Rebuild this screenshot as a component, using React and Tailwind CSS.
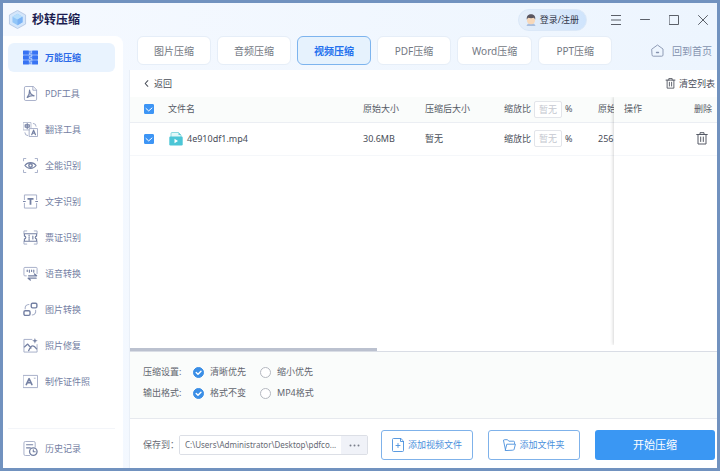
import React from "react";

const stroke = {
  fill: "none",
  stroke: "currentColor",
  strokeWidth: 1,
  strokeLinecap: "round",
  strokeLinejoin: "round",
};

const FRAME = "M1 4V1h3M12 1h3v3M15 12v3h-3M4 15H1v-3";
const FAINT = "#a3acc6";

function Glyph({ name }) {
  switch (name) {
    case "compress":
      return (
        <g>
          <path d="M6 0.500h4v15H6z" fill="#a9c6fb" />
          <g fill="#3873f3">
            <rect x="0" y="0.500" width="6.300" height="4.600" rx="0.600" />
            <rect x="0" y="5.700" width="6.300" height="4.600" rx="0.600" />
            <rect x="0" y="10.900" width="6.300" height="4.600" rx="0.600" />
            <rect x="9.700" y="0.500" width="6.300" height="4.600" rx="0.600" />
            <rect x="9.700" y="5.700" width="6.300" height="4.600" rx="0.600" />
            <rect x="9.700" y="10.900" width="6.300" height="4.600" rx="0.600" />
          </g>
          <path d="M6.800 2h1.200M8 4h1.200M6.800 6h1.200M8 8h1.200M6.800 10h1.200M8 12h1.200M6.800 14h1.200" stroke="#3873f3" strokeWidth="1.200" />
        </g>
      );
    case "pdf":
      return (
        <g {...stroke}>
          <path d="M10.500 0.500H3A1.500 1.500 0 0 0 1.500 2v12A1.500 1.500 0 0 0 3 15.500h10a1.500 1.500 0 0 0 1.500-1.500V4.500zM10.500 0.500v4h4" stroke={FAINT} />
          <path d="M7 4.500c0.300 3 2 5 4.800 6-2.500-0.300-5 0-7.300 1.700C6.300 10 7.200 7.500 7 4.500z" fill="currentColor" fillOpacity="0.350" strokeWidth="1.300" />
        </g>
      );
    case "translate":
      return (
        <g {...stroke}>
          <rect x="0.500" y="0.500" width="8" height="8" stroke={FAINT} strokeWidth="0.800" />
          <path d="M2.300 3h4.400v2.400H2.300zM4.500 1.700v5.500" strokeWidth="1.200" />
          <rect x="7" y="7" width="8.500" height="8.500" fill="#fff" stroke={FAINT} />
          <path d="M9.300 13.500l2-4.800 2 4.800M10 12h2.600" strokeWidth="1.300" />
          <path d="M11 1.500a3 3 0 0 1 3 3M5 14.500a3 3 0 0 1-3-3" stroke={FAINT} />
        </g>
      );
    case "eye":
      return (
        <g {...stroke}>
          <path d="M0.500 3V0.500H3M13 0.500h2.500V3M15.500 13v2.500H13M3 15.500H0.500V13" stroke={FAINT} />
          <path d="M2 8C5 3.900 11 3.900 14 8 11 12.100 5 12.100 2 8z" strokeWidth="1.200" />
          <circle cx="8" cy="8" r="1.800" strokeWidth="1.500" />
        </g>
      );
    case "text":
      return (
        <g {...stroke}>
          <path d="M1.500 6V1h13v5M14.500 10v5h-13v-5" stroke={FAINT} />
          <path d="M0 8h2.500M13.500 8h2.500" />
          <path d="M4.800 5.300h6.400M8 5.300v6.200" strokeWidth="1.900" strokeLinecap="butt" />
        </g>
      );
    case "ticket":
      return (
        <g {...stroke}>
          <path d={FRAME} stroke={FAINT} />
          <path d="M1.500 4h13v2.500a1.500 1.500 0 0 0 0 3V12h-13V9.500a1.500 1.500 0 0 0 0-3z" strokeWidth="1.200" />
          <path d="M6.500 5.500v1M6.500 7.700v1M6.500 10v1M10.500 6.500v3" strokeWidth="1.200" />
        </g>
      );
    case "voice":
      return (
        <g {...stroke}>
          <path d="M3.500 10.500H2A1 1 0 0 1 1 9.500v-7a1 1 0 0 1 1-1h12a1 1 0 0 1 1 1V8" stroke={FAINT} />
          <path d="M4.500 4.300v1.500M6.800 4.300v2.400M9.200 4.300v1.500M11.500 4.300v2.400" strokeWidth="1.200" />
          <path d="M6 10.500h8.500l-2.300-2M14 13H5.500l2.300 2" strokeWidth="1.400" />
        </g>
      );
    case "convert":
      return (
        <g {...stroke}>
          <rect x="8.800" y="1.300" width="6" height="5" rx="1.400" strokeWidth="1.500" />
          <rect x="1" y="9.300" width="6.500" height="5" rx="1.400" strokeWidth="1.500" />
          <path d="M2.300 7.300C2 4.500 3.500 2.800 6.300 2.600M13.500 8.800c0.500 2.700-1 4.700-3.700 5" stroke={FAINT} strokeWidth="1.100" />
        </g>
      );
    case "repair":
      return (
        <g {...stroke}>
          <path d="M9.500 1.500H1v13.500h14V7" stroke={FAINT} />
          <path d="M1.500 9.500L5 6.500l3.500 4.200M6 13.500C7.500 10 9 8.300 10.500 8.300s2.500 1.200 4 3.200" strokeWidth="1.400" />
          <path d="M12.700 0l0.800 2.200 2.200 0.800-2.200 0.800-0.800 2.200-0.800-2.200-2.200-0.800 2.200-0.800z" fill="currentColor" stroke="none" />
        </g>
      );
    case "portrait":
      return (
        <g {...stroke}>
          <rect x="0.500" y="1.500" width="15" height="13" stroke={FAINT} />
          <path d="M3.500 11.300L6.500 5l3 6.300M4.700 9.300h3.600" strokeWidth="1.700" />
          <path d="M12 4.500h1" stroke={FAINT} />
        </g>
      );
    default:
      return (
        <g {...stroke}>
          <path d="M7 15.500H2.500A1.500 1.500 0 0 1 1 14V2A1.500 1.500 0 0 1 2.500 0.500h9A1.500 1.500 0 0 1 13 2v4.500" stroke={FAINT} />
          <path d="M3.800 4h6.500M3.800 7.300h4" strokeWidth="1.300" />
          <circle cx="11" cy="11.300" r="4" strokeWidth="1.400" />
          <path d="M11 9.300v2.200h2" strokeWidth="1.200" />
        </g>
      );
  }
}

function NavIcon({ name }) {
  return (
    <svg viewBox="0 0 16 16" className="size-[15px] shrink-0" aria-hidden="true">
      <Glyph name={name} />
    </svg>
  );
}

const navItems = [
  ["compress", "万能压缩"],
  ["pdf", "PDF工具"],
  ["translate", "翻译工具"],
  ["eye", "全能识别"],
  ["text", "文字识别"],
  ["ticket", "票证识别"],
  ["voice", "语音转换"],
  ["convert", "图片转换"],
  ["repair", "照片修复"],
  ["portrait", "制作证件照"],
];

const tabs = ["图片压缩", "音频压缩", "视频压缩", "PDF压缩", "Word压缩", "PPT压缩"];

function Trash({ className }) {
  return (
    <svg viewBox="0 0 12 13" className={className} aria-hidden="true">
      <g {...stroke}>
        <path d="M0.700 2.500h10.600M4 2.500v-1.800h4v1.800M2 2.500v9.500h8V2.500M4.700 5v4.500M7.300 5v4.500" />
      </g>
    </svg>
  );
}

function Sidebar() {
  return (
    <nav className="flex w-30 shrink-0 flex-col rounded-tr-lg bg-white px-[5px] pt-[7px] text-[#7480a3]">
      <ul className="flex flex-col gap-[7px]">
        {navItems.map(([icon, label], i) => (
          <li key={label}>
            <button
              type="button"
              className={
                i === 0
                  ? "flex h-[29px] w-[107px] items-center gap-[7px] rounded-md bg-[#e9f3fe] pl-[15px] font-bold text-[#2b69e8]"
                  : "flex h-[29px] w-[107px] items-center gap-[7px] rounded-md pl-[15px]"
              }
            >
              <NavIcon name={icon} />
              {label}
            </button>
          </li>
        ))}
      </ul>
      <div className="mt-auto w-[107px] border-t border-[#f3f5f9] py-[5px]">
        <button type="button" className="flex h-[29px] w-full items-center gap-[7px] pl-[15px]">
          <NavIcon name="history" />
          历史记录
        </button>
      </div>
    </nav>
  );
}

function Header() {
  return (
    <header className="flex h-[33px] shrink-0 items-center pl-[5px]">
      <svg viewBox="0 0 20 20" className="size-[19px]" aria-hidden="true">
        <path d="M10 0.500l8.500 4.700v9.600L10 19.500l-8.500-4.700V5.200z" fill="#d3e6fb" stroke="#b3c6e2" strokeWidth="0.900" />
        <path d="M10 4l5.300 3v6L10 16l-5.300-3V7z" fill="#92c6f8" />
        <path d="M10 4l5.300 3L10 10 4.700 7z" fill="#b8dffc" />
        <path d="M10 10l5.300-3v6L10 16z" fill="#7ab2f5" />
      </svg>
      <h1 className="ml-[5px] text-xs font-bold text-[#1b1c50]">秒转压缩</h1>
      <button
        type="button"
        className="ml-auto flex h-[22px] items-center gap-[3px] rounded-full border border-[#dbe8f8] bg-linear-to-r from-[#e6effa] to-[#cfe4fc] pr-[7px] pl-[6px] text-[#33384a]"
      >
        <svg viewBox="0 0 12 12" className="size-3" aria-hidden="true">
          <path d="M1.500 12c0.500-2 2-2.700 4.500-2.700s4 0.700 4.500 2.700z" fill="#a9bfdf" />
          <circle cx="6" cy="6.300" r="4" fill="#f7d8ba" />
          <path d="M1.800 5.500C1.300 2 3.500 0.300 6 0.300s4.800 1.500 4.200 5.200C9.500 5 9.500 4.300 9 3.800 7 4.300 4.800 4.200 3 3.800 2.500 4.300 2.600 5 1.800 5.500z" fill="#5a5660" />
        </svg>
        登录/注册
      </button>
      <div className="ml-[15px] flex gap-px text-[#5b6069]">
        <button type="button" aria-label="菜单" className="grid h-7 w-7 place-items-center">
          <svg viewBox="0 0 10 10" className="size-[10px]"><path d="M0 0.500h10M0 5h10M0 9.500h10" {...stroke} /></svg>
        </button>
        <button type="button" aria-label="最小化" className="grid h-7 w-7 place-items-center">
          <svg viewBox="0 0 10 10" className="size-[10px]"><path d="M0.500 4.500h9" {...stroke} /></svg>
        </button>
        <button type="button" aria-label="最大化" className="grid h-7 w-7 place-items-center">
          <svg viewBox="0 0 10 10" className="size-[10px]"><path d="M0.500 0.500h9v9h-9z" {...stroke} /></svg>
        </button>
        <button type="button" aria-label="关闭" className="grid h-7 w-7 place-items-center">
          <svg viewBox="0 0 10 10" className="size-[10px]"><path d="M0.500 0.500l9 9M9.500 0.500l-9 9" {...stroke} /></svg>
        </button>
      </div>
    </header>
  );
}

function Check({ label }) {
  return (
    <label className="grid size-[10px]">
      <input
        type="checkbox"
        defaultChecked
        aria-label={label}
        className="peer col-start-1 row-start-1 size-[10px] appearance-none rounded-[1px] border border-[#c0c4cc] bg-white checked:border-[#3d95f5] checked:bg-[#3d95f5]"
      />
      <svg viewBox="0 0 10 10" className="pointer-events-none z-10 col-start-1 row-start-1 size-[10px] text-white opacity-0 peer-checked:opacity-100" aria-hidden="true">
        <path d="M2 4.500l2.700 2.400L8 4" {...stroke} />
      </svg>
    </label>
  );
}

function Ratio({ id }) {
  return (
    <div className="flex items-center gap-[3px]">
      <label htmlFor={id}>缩放比</label>
      <input
        id={id}
        type="text"
        placeholder="暂无"
        className="h-[17px] w-7 rounded-xs border border-[#e3e5ea] bg-white text-center placeholder:text-[#c5c8d0]"
      />
      <span>%</span>
    </div>
  );
}

function Radio({ name, label, checked }) {
  return (
    <label className="flex w-[67px] items-center gap-[6px]">
      <span className="grid size-[11px]">
        <input
          type="radio"
          name={name}
          defaultChecked={checked}
          className="peer col-start-1 row-start-1 size-[11px] appearance-none rounded-full border border-[#b4b8c0] bg-white checked:border-[#3a8ee6] checked:bg-[#3a8ee6]"
        />
        <svg viewBox="0 0 11 11" className="pointer-events-none z-10 col-start-1 row-start-1 size-[11px] text-white opacity-0 peer-checked:opacity-100" aria-hidden="true">
          <path d="M3.200 5.500l1.800 1.800L8 4.200" {...stroke} strokeWidth="1.400" />
        </svg>
      </span>
      {label}
    </label>
  );
}

function FileTable() {
  return (
    <div className="flex min-h-0 flex-1 pb-[3px]">
      <div className="min-w-0 flex-1 overflow-hidden">
        <table className="w-full min-w-[568px] table-fixed text-left whitespace-nowrap">
          <colgroup>
            <col className="w-[38px]" />
            <col />
            <col className="w-[62px]" />
            <col className="w-[79px]" />
            <col className="w-[94px]" />
            <col className="w-[100px]" />
          </colgroup>
          <thead className="text-[#565b66]">
            <tr className="h-[25px] border-b border-[#ebeef3] bg-[#fafcfb]">
              <th className="pl-[14px] font-normal"><Check label="全选" /></th>
              <th className="font-normal">文件名</th>
              <th className="font-normal">原始大小</th>
              <th className="font-normal">压缩后大小</th>
              <th className="font-normal"><Ratio id="ratio-all" /></th>
              <th className="font-normal">原始</th>
            </tr>
          </thead>
          <tbody className="text-[#484d58]">
            <tr className="h-[33px] border-b border-[#f5f7fa]">
              <td className="pl-[14px]"><Check label="4e910df1.mp4" /></td>
              <td>
                <span className="flex items-center gap-1 pl-px">
                  <svg viewBox="0 0 14 14" className="size-[14px]" aria-hidden="true">
                    <path d="M2 6V1.500a1 1 0 0 1 1-1h6.500L12 3v3z" fill="#e3f8f9" stroke="#62cdd5" strokeWidth="0.700" />
                    <path d="M9.500 0.500V3H12z" fill="#62cdd5" />
                    <rect x="0.300" y="4.500" width="13.400" height="9" rx="1.200" fill="#4cc6d6" />
                    <path d="M5.500 6.800v4.400L9 9z" fill="#fff" />
                  </svg>
                  4e910df1.mp4
                </span>
              </td>
              <td>30.6MB</td>
              <td>暂无</td>
              <td><Ratio id="ratio-file" /></td>
              <td>256</td>
            </tr>
          </tbody>
        </table>
      </div>
      <div className="w-[103px] shrink-0 bg-white shadow-[-1px_0_3px_rgba(0,0,0,0.16)] [clip-path:inset(0_0_0_-4px)]">
        <table className="w-full text-left text-[#565b66]">
          <thead>
            <tr className="h-[25px] border-b border-[#ebeef3] bg-[#fafcfb]">
              <th className="pl-[10px] font-normal">操作</th>
              <th className="pr-[5px] text-right font-normal">删除</th>
            </tr>
          </thead>
          <tbody>
            <tr className="h-[33px] border-b border-[#f5f7fa]">
              <td />
              <td className="pr-[9px]">
                <button type="button" aria-label="删除" className="ml-auto block">
                  <Trash className="h-[13px] w-3" />
                </button>
              </td>
            </tr>
          </tbody>
        </table>
      </div>
    </div>
  );
}

function Footer() {
  return (
    <footer className="flex h-[50px] shrink-0 items-center border-t border-[#e6e9ee] bg-white pt-[3px] pr-[2px] pl-[13px] text-[#666a74]">
      <label htmlFor="save-path" className="w-9 shrink-0 whitespace-nowrap">保存到：</label>
      <div className="flex h-5 min-w-0 flex-1 overflow-hidden rounded-xs border border-[#dcdfe6]">
        <input
          id="save-path"
          type="text"
          readOnly
          defaultValue="C:\Users\Administrator\Desktop\pdfco..."
          className="min-w-0 flex-1 bg-white pl-[5px] text-[8px]"
        />
        <button type="button" aria-label="浏览" className="grid w-[26px] place-items-center bg-[#f0f2f8]">
          <svg viewBox="0 0 11 3" className="h-[3px] w-[11px]" fill="#7a7f8c" aria-hidden="true">
            <circle cx="1.500" cy="1.500" r="1" />
            <circle cx="5.500" cy="1.500" r="1" />
            <circle cx="9.500" cy="1.500" r="1" />
          </svg>
        </button>
      </div>
      <button type="button" className="ml-[13px] flex h-[30px] w-[92px] shrink-0 items-center justify-center gap-1 rounded-[3px] border border-[#7fb2ea] text-[#4a90dc]">
        <svg viewBox="0 0 12 14" className="h-[14px] w-3" aria-hidden="true">
          <path d="M8.500 0.500H1.500a1 1 0 0 0-1 1v11a1 1 0 0 0 1 1h9a1 1 0 0 0 1-1V3.500zM8.500 0.500v3h3M6 5.500v4M4 7.500h4" {...stroke} strokeWidth="0.900" />
        </svg>
        添加视频文件
      </button>
      <button type="button" className="ml-[15px] flex h-[30px] w-[92px] shrink-0 items-center justify-center gap-[3px] rounded-[3px] border border-[#7fb2ea] text-[#4a90dc]">
        <svg viewBox="0 0 13 12" className="h-3 w-[13px]" aria-hidden="true">
          <path d="M2.500 11L0.600 2a1 1 0 0 1 1-1.300h2.900l1.300 1.500h4.700a1 1 0 0 1 1 1v1.300M2.300 11.200l1.500-6h8.600l-1.300 5.200a1 1 0 0 1-1 0.800z" {...stroke} strokeWidth="0.900" />
        </svg>
        添加文件夹
      </button>
      <button type="button" className="ml-[15px] h-[30px] w-[120px] shrink-0 rounded-[3px] bg-[#3a97f3] text-[11px] text-white">
        开始压缩
      </button>
    </footer>
  );
}

export default function App() {
  return (
    <div className="flex min-h-screen flex-col border-3 border-[#7192bf] bg-linear-to-r from-[#f5f9ff] to-[#edf5fe] font-['Noto_Sans','Noto_Sans_CJK_SC',sans-serif] text-[9px] leading-3">
      <Header />
      <div className="flex flex-1">
        <Sidebar />
        <main className="flex min-w-0 flex-1 flex-col pl-[6px]">
          <div className="flex h-[34px] shrink-0 items-start gap-[6px] pr-[5px] pl-2 text-[10px] text-[#737883]">
            {tabs.map((t, i) => (
              <button
                key={t}
                type="button"
                className={
                  i === 2
                    ? "h-[29px] min-w-[74px] rounded-md border border-[#7db4ee] bg-[#e6f2fd] px-[14px] font-bold whitespace-nowrap text-[#2370ee]"
                    : "h-[29px] min-w-[74px] rounded-md border border-[#e6eef8] bg-white px-[14px] whitespace-nowrap"
                }
              >
                {t}
              </button>
            ))}
            <a href="#" className="ml-auto flex h-[29px] items-center gap-2 whitespace-nowrap text-[#8492ae]">
              <svg viewBox="0 0 13 13" className="size-[13px]" aria-hidden="true">
                <path d="M1 5l5.500-4L12 5v6a1.200 1.200 0 0 1-1.200 1.200H2.200A1.200 1.200 0 0 1 1 11z" {...stroke} strokeWidth="0.900" />
                <path d="M5.500 8.500h2" {...stroke} strokeWidth="1.400" />
              </svg>
              回到首页
            </a>
          </div>
          <section className="flex flex-1 flex-col border-l border-[#e9eff7] bg-white">
            <div className="flex h-[27px] shrink-0 items-center justify-between pr-[2px] pl-[14px] text-[#484d58]">
              <button type="button" className="flex items-center gap-[5px]">
                <svg viewBox="0 0 5 8" className="h-[7px] w-[5px]" aria-hidden="true">
                  <path d="M4 0.800L1 4l3 3.200" {...stroke} strokeWidth="1.200" />
                </svg>
                返回
              </button>
              <button type="button" className="flex items-center gap-[3px]">
                <Trash className="h-[11px] w-[11px]" />
                清空列表
              </button>
            </div>
            <FileTable />
            <div className="h-[3px] w-[42%] shrink-0 bg-[#bbc1cf]" />
            <div className="flex h-[67px] shrink-0 flex-col gap-[9px] border-t border-[#d9dde5] bg-[#fafcfb] pt-[14px] pl-[13px] text-[#62666f]">
              <div role="radiogroup" aria-label="压缩设置" className="flex items-center">
                <span className="w-[50px]">压缩设置:</span>
                <Radio name="mode" label="清晰优先" checked />
                <Radio name="mode" label="缩小优先" />
              </div>
              <div role="radiogroup" aria-label="输出格式" className="flex items-center">
                <span className="w-[50px]">输出格式:</span>
                <Radio name="format" label="格式不变" checked />
                <Radio name="format" label="MP4格式" />
              </div>
            </div>
            <Footer />
          </section>
        </main>
      </div>
    </div>
  );
}
